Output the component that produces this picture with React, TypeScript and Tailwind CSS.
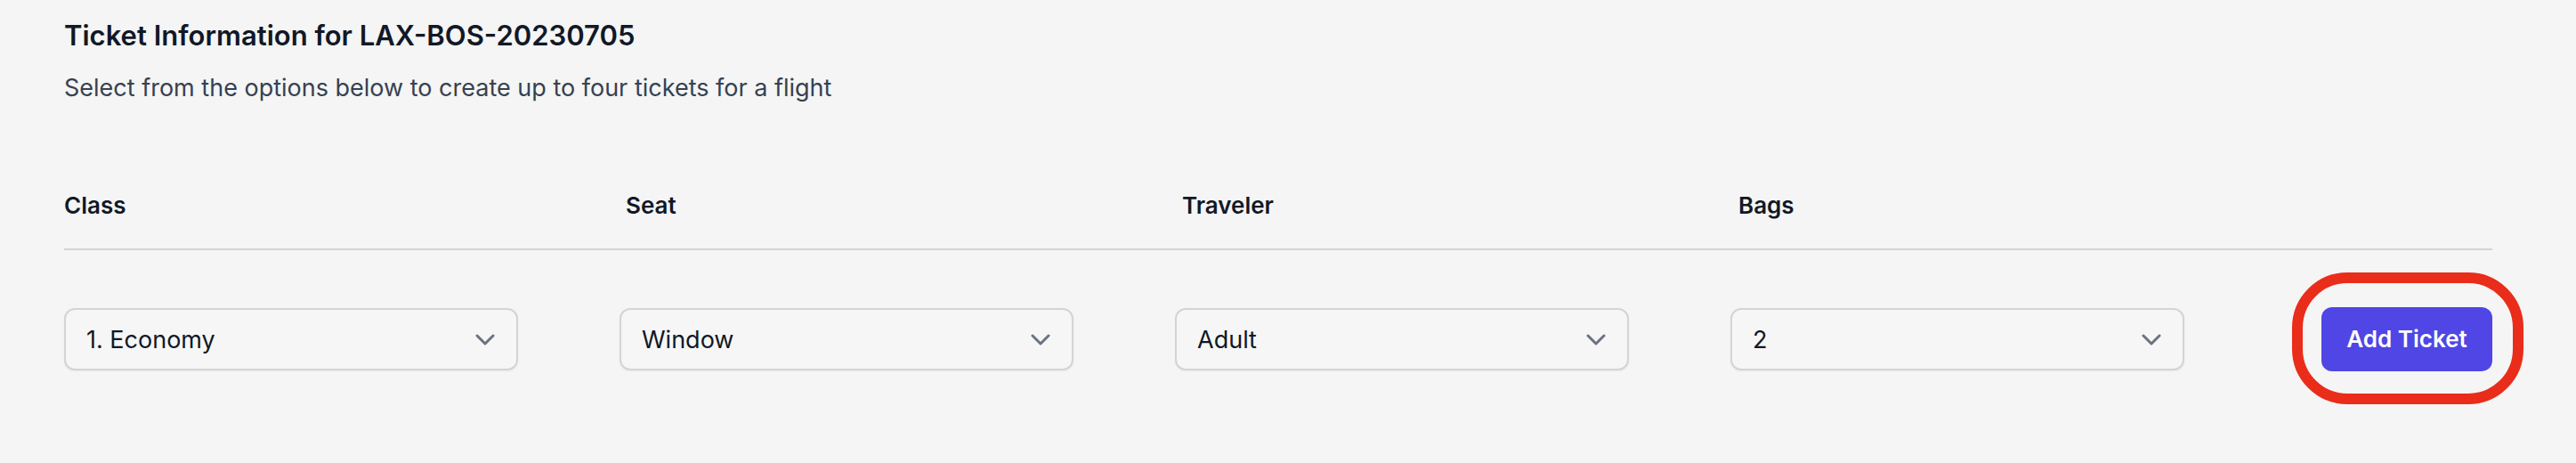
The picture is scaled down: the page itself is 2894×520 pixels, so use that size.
import React from "react";

const font = { fontFamily: "Inter, 'Noto Sans', sans-serif" };

function Chevron() {
  return (
    <svg width="22" height="13" viewBox="0 0 22 13" fill="none" className="shrink-0">
      <path d="M2 2 L11 11 L20 2" stroke="#6b7280" strokeWidth="3" strokeLinecap="round" strokeLinejoin="round" />
    </svg>
  );
}

function SelectBox({ value }: { value: string }) {
  return (
    <div className="flex h-[70px] w-[510px] items-center justify-between rounded-[12px] border-2 border-[#d4d4d8] bg-[#f5f6f5] pl-[23px] pr-[24px] shadow-[0_1px_2px_rgba(0,0,0,0.06)]">
      <span className="text-[27px] leading-none text-[#111827]">{value}</span>
      <Chevron />
    </div>
  );
}

export default function App() {
  return (
    <div className="h-[520px] w-[2894px] bg-[#f4f5f4] pl-[72px] pr-[94px]" style={font}>
      <h1 className="pt-[24px] text-[31px] font-semibold leading-[31px] text-[#111827]">
        Ticket Information for LAX-BOS-20230705
      </h1>
      <p className="mt-[30px] text-[27px] leading-[27px] text-[#374151]">
        Select from the options below to create up to four tickets for a flight
      </p>
      <div className="mt-[106px] flex border-b-2 border-[#d4d4d4] pb-[35px] text-[26px] font-semibold leading-[26px] text-[#111827]">
        <div className="w-[631px]">Class</div>
        <div className="w-[625px]">Seat</div>
        <div className="w-[625px]">Traveler</div>
        <div className="flex-1">Bags</div>
      </div>
      <div className="mt-[64px] flex items-center">
        <div className="flex gap-[114px]">
          <SelectBox value="1. Economy" />
          <SelectBox value="Window" />
          <SelectBox value="Adult" />
          <SelectBox value="2" />
        </div>
        <div className="ml-auto">
          <div className="relative">
            <button className="h-[72px] w-[192px] rounded-[12px] bg-[#4f46e5] text-[26px] font-semibold leading-none text-white">
              Add Ticket
            </button>
            <div className="pointer-events-none absolute -bottom-[37px] -left-[33px] -right-[35px] -top-[39px] rounded-[62px] border-[12px] border-[#ea2c1a]" />
          </div>
        </div>
      </div>
    </div>
  );
}
